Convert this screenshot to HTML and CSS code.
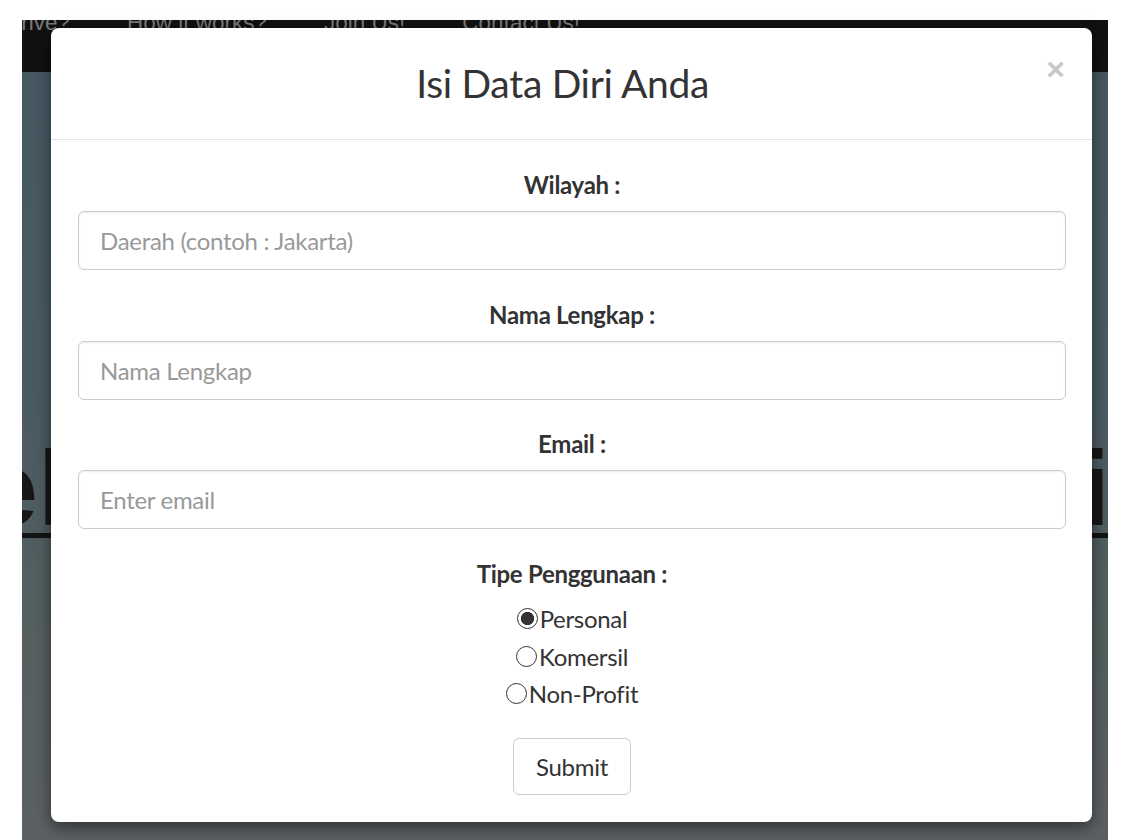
FILE: index.html
```html
<!DOCTYPE html>
<html lang="id">
<head>
<meta charset="utf-8">
<title>Isi Data Diri Anda</title>
<link rel="stylesheet" href="styles.css">
</head>
<body>
<div class="page">
  <nav class="navbar">
    <ul class="nav">
      <li class="nav-first">Drive?</li>
      <li>How it works?</li>
      <li>Join Us!</li>
      <li>Contact Us!</li>
    </ul>
  </nav>
  <section class="hero">
    <h1 class="hero-title"><span class="hero-left">el</span><span class="hero-right">i</span></h1>
  </section>
</div>

<div class="modal" role="dialog">
  <div class="modal-header">
    <h4 class="modal-title">Isi Data Diri Anda</h4>
    <button class="close" type="button">&times;</button>
  </div>
  <form class="modal-body">
    <div class="form-group">
      <label class="field-label" for="wilayah">Wilayah :</label>
      <input class="form-control" id="wilayah" type="text" placeholder="Daerah (contoh : Jakarta)">
    </div>
    <div class="form-group">
      <label class="field-label" for="nama">Nama Lengkap :</label>
      <input class="form-control" id="nama" type="text" placeholder="Nama Lengkap">
    </div>
    <div class="form-group">
      <label class="field-label" for="email">Email :</label>
      <input class="form-control" id="email" type="email" placeholder="Enter email">
    </div>
    <div class="radio-group">
      <div class="field-label">Tipe Penggunaan :</div>
      <div class="radio-list">
        <label class="radio"><input type="radio" name="tipe" checked>Personal</label>
        <label class="radio"><input type="radio" name="tipe">Komersil</label>
        <label class="radio"><input type="radio" name="tipe">Non-Profit</label>
      </div>
    </div>
    <button class="btn" type="button">Submit</button>
  </form>
</div>
</body>
</html>
```

FILE: styles.css
```css
html, body {
  margin: 0;
  padding: 0;
  background: #ffffff;
}

body {
  font-family: Lato, "Liberation Sans", sans-serif;
  color: #333333;
  height: 840px;
  overflow: hidden;
  position: relative;
}

/* ---------- page behind the modal (already dimmed) ---------- */
.page {
  margin: 20px 0 0 22px;
  width: 1086px;
  height: 820px;
  overflow: hidden;
  background: linear-gradient(180deg, #465862 0%, #4a5a63 45%, #55605f 75%, #5c6063 100%);
}

.navbar {
  display: flow-root;
  height: 52px;
  background: #111111;
}

.nav {
  display: flex;
  gap: 57px;
  list-style: none;
  margin: -10px 0 0 0;
  padding: 0;
  font-family: "Liberation Sans", Arial, sans-serif;
  font-size: 22.5px;
  line-height: 26px;
  color: #7a7a7a;
  white-space: nowrap;
}

.nav-first {
  margin-left: -17px;
  margin-right: 0;
}

.hero {
  margin-top: 371px;
}

.hero-title {
  display: flex;
  justify-content: space-between;
  margin: 0;
  height: 90px;
  border-bottom: 5px solid #141414;
  font-family: "Liberation Sans", Arial, sans-serif;
  font-weight: bold;
  font-size: 106px;
  line-height: 90px;
  color: #171717;
}

.hero-left {
  margin-left: -43px;
}

.hero-right {
  margin-right: -2px;
}

/* ---------- modal ---------- */
.modal {
  position: absolute;
  left: 51px;
  top: 28px;
  width: 1041px;
  height: 794px;
  background: #ffffff;
  border-radius: 8px;
  box-shadow: 0 5px 16px rgba(0, 0, 0, 0.5);
  display: flex;
  flex-direction: column;
}

.modal-header {
  height: 111px;
  border-bottom: 1px solid #e5e5e5;
  display: flex;
  align-items: center;
  padding: 0 27px 0 28px;
}

.modal-title {
  flex: 1;
  margin: 0;
  text-align: center;
  font-weight: normal;
  font-size: 39px;
  letter-spacing: -0.3px;
  line-height: 1.2;
  color: #333333;
}

.close {
  align-self: flex-start;
  margin-top: 25px;
  padding: 0;
  border: 0;
  background: transparent;
  font-family: "Liberation Sans", Arial, sans-serif;
  font-weight: bold;
  font-size: 32px;
  line-height: 32px;
  color: #c8c8c8;
  cursor: pointer;
}

.modal-body {
  padding: 30px 26px 26px 27px;
  text-align: center;
}

.form-group {
  margin-bottom: 29.5px;
}

.radio-group {
  margin-top: 1.5px;
}

.field-label {
  display: block;
  margin-bottom: 11px;
  font-weight: bold;
  font-size: 24px;
  letter-spacing: -0.3px;
  line-height: 30px;
  color: #333333;
}

.form-control {
  display: block;
  width: 100%;
  height: 59px;
  box-sizing: border-box;
  padding: 0 21px;
  border: 1px solid #cccccc;
  border-radius: 6px;
  box-shadow: inset 0 1px 2px rgba(0, 0, 0, 0.075);
  font-family: Lato, "Liberation Sans", sans-serif;
  font-size: 24px;
  letter-spacing: -0.3px;
  color: #555555;
  background: #ffffff;
  outline: none;
}

.form-control::placeholder {
  color: #999999;
}

.radio {
  display: flex;
  justify-content: center;
  align-items: center;
  height: 37.7px;
  font-size: 24px;
  letter-spacing: -0.3px;
  color: #333333;
}

.radio input {
  appearance: none;
  -webkit-appearance: none;
  width: 21px;
  height: 21px;
  margin: 0 2px 0 0;
  border: 1.5px solid #333333;
  border-radius: 50%;
  background: #ffffff;
  box-sizing: border-box;
}

.radio input:checked {
  background: radial-gradient(circle, #333333 0 6.3px, #ffffff 6.9px);
}

.btn {
  margin-top: 25px;
  height: 57px;
  padding: 0 22px;
  border: 1px solid #cccccc;
  border-radius: 6px;
  background: #ffffff;
  font-family: Lato, "Liberation Sans", sans-serif;
  font-size: 24px;
  letter-spacing: -0.3px;
  color: #333333;
  cursor: pointer;
}
```
